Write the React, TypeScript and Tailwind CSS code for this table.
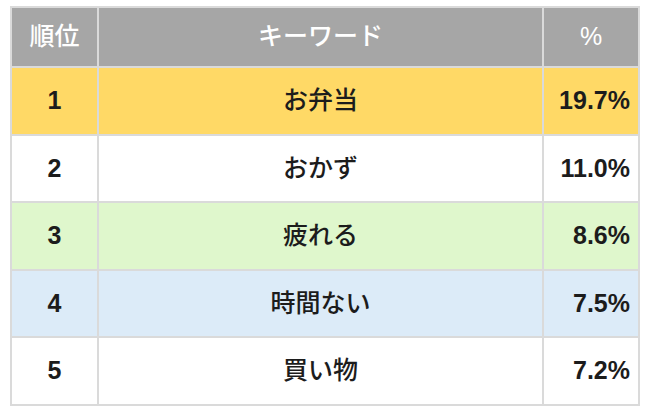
import React from "react";

const rows = [
  { r: "1", k: "お弁当", p: "19.7%", bg: "bg-[#ffd966]" },
  { r: "2", k: "おかず", p: "11.0%", bg: "bg-white" },
  { r: "3", k: "疲れる", p: "8.6%", bg: "bg-[#dff7cc]" },
  { r: "4", k: "時間ない", p: "7.5%", bg: "bg-[#dcebf8]" },
  { r: "5", k: "買い物", p: "7.2%", bg: "bg-white" },
];

export default function App() {
  return (
    <div
      className="w-[650px] h-[419px] bg-white pt-[6px] pl-[10px]"
      style={{ fontFamily: '"Liberation Sans", "Noto Sans CJK JP", sans-serif' }}
    >
      <div className="w-fit grid grid-cols-[85px_443px_94px] gap-[2px] bg-[#dadada] p-[2px] text-[25px] text-[#1c1c1c]">
        <div className="h-[58px] bg-[#a6a6a6] text-white font-medium flex items-center justify-center">順位</div>
        <div className="h-[58px] bg-[#a6a6a6] text-white font-medium flex items-center justify-center">キーワード</div>
        <div className="h-[58px] bg-[#a6a6a6] text-white flex items-center justify-center">%</div>
        {rows.map((row) => (
          <React.Fragment key={row.r}>
            <div className={`h-[65.6px] ${row.bg} font-bold flex items-center justify-center`}>{row.r}</div>
            <div className={`h-[65.6px] ${row.bg} font-medium flex items-center justify-center`}>{row.k}</div>
            <div className={`h-[65.6px] ${row.bg} font-bold flex items-center justify-end pr-[8px]`}>{row.p}</div>
          </React.Fragment>
        ))}
      </div>
    </div>
  );
}
